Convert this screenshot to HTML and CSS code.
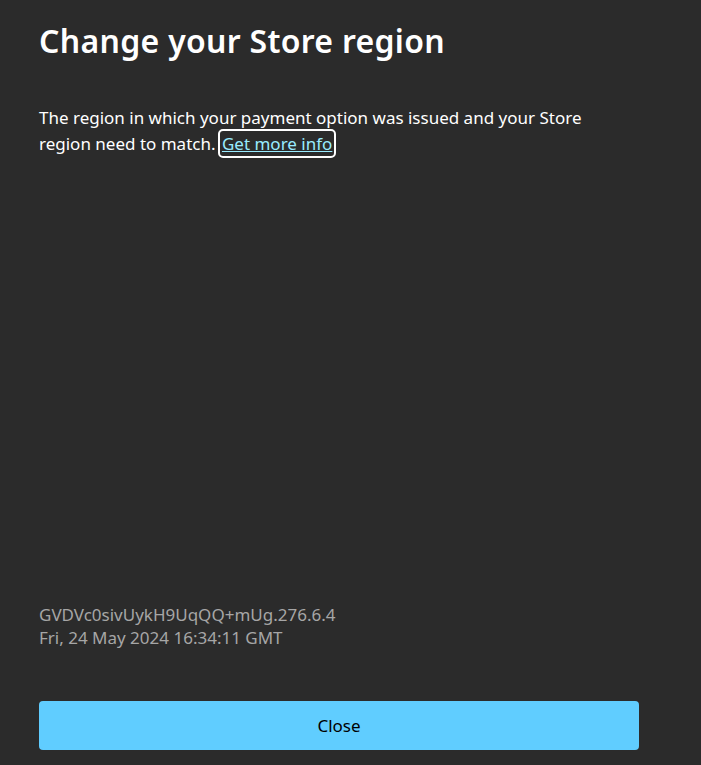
FILE: index.html
```html
<!DOCTYPE html>
<html>
<head>
<meta charset="utf-8">
<title>Change your Store region</title>
<link rel="stylesheet" href="styles.css">
</head>
<body>
<div class="dialog">
  <h1 class="title">Change your Store region</h1>
  <p class="message">The region in which your payment option was issued and your Store region need to match. <a class="info-link" href="#">Get more info</a></p>
  <div class="meta">
    <div>GVDVc0sivUykH9UqQQ+mUg.276.6.4</div>
    <div>Fri, 24 May 2024 16:34:11 GMT</div>
  </div>
  <button class="close-btn">Close</button>
</div>
</body>
</html>
```
FILE: styles.css
```css
* {
  box-sizing: border-box;
  margin: 0;
  padding: 0;
}

body {
  background-color: #2b2b2b;
  color: #ffffff;
  font-family: "Noto Sans", "Open Sans", sans-serif;
  height: 100vh;
  overflow: hidden;
}

.dialog {
  display: flex;
  flex-direction: column;
  height: 100%;
  padding: 18px 62px 15px 39px;
}

.title {
  font-size: 32px;
  font-weight: 600;
  line-height: 46px;
  letter-spacing: 0.3px;
}

.message {
  margin-top: 41px;
  font-size: 17px;
  line-height: 26px;
  width: 580px;
}

/* focused link keeps its white focus ring */
.info-link {
  color: #99ebff;
  text-decoration: underline;
  outline: 2px solid #ffffff;
  border-radius: 3px;
  padding: 1px 2px;
}

.meta {
  margin-top: auto;
  color: #a6a6a6;
  font-size: 17px;
  line-height: 23px;
}

.close-btn {
  margin-top: 52px;
  width: 600px;
  height: 49px;
  background-color: #60cdff;
  border: none;
  border-radius: 4px;
  color: #000000;
  font-family: inherit;
  font-size: 17px;
}
```
